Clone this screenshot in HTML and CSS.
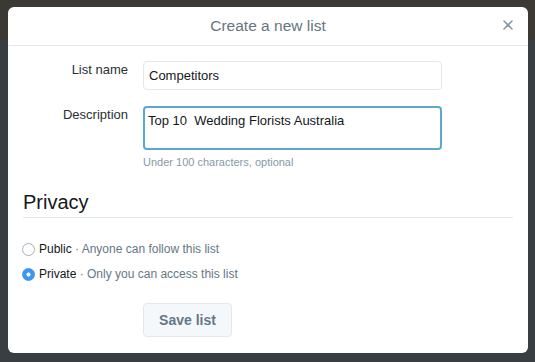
FILE: index.html
```html
<!DOCTYPE html>
<html>
<head>
<meta charset="utf-8">
<link rel="stylesheet" href="styles.css">
</head>
<body>
<div class="modal">
  <div class="modal-header">
    <h1 class="modal-title">Create a new list</h1>
    <button class="close" aria-label="Close">
      <svg width="10" height="10" viewBox="0 0 10 10"><path d="M1 1 L9 9 M9 1 L1 9" stroke="#8899a6" stroke-width="1.6" stroke-linecap="round"/></svg>
    </button>
  </div>
  <div class="modal-body">
    <div class="form-grid">
      <label class="field-label">List name</label>
      <input class="text-input" type="text" value="Competitors">
      <label class="field-label">Description</label>
      <div class="field">
        <textarea class="text-area">Top 10  Wedding Florists Australia</textarea>
        <p class="hint">Under 100 characters, optional</p>
      </div>
    </div>
    <h2 class="section-title">Privacy</h2>
    <div class="radios">
      <label class="radio-row"><input type="radio" name="privacy" class="radio"><span class="opt">Public</span><span class="desc">&nbsp;· Anyone can follow this list</span></label>
      <label class="radio-row"><input type="radio" name="privacy" class="radio" checked><span class="opt">Private</span><span class="desc">&nbsp;· Only you can access this list</span></label>
    </div>
    <div class="actions">
      <button class="btn">Save list</button>
    </div>
  </div>
</div>
</body>
</html>
```
FILE: styles.css
```css
* { box-sizing: border-box; }
html, body { margin: 0; padding: 0; }
body {
  width: 535px;
  height: 362px;
  overflow: hidden;
  font-family: "Liberation Sans", Arial, sans-serif;
  background: linear-gradient(to bottom, #3c3934 0, #3c3934 40px, #383e42 40px, #383e42 100%);
  padding: 7px 7px 9px 8px;
}
.modal {
  width: 520px;
  height: 346px;
  background: #fff;
  border-radius: 6px;
  overflow: hidden;
}
.modal-header {
  height: 39px;
  border-bottom: 1px solid #e1e8ed;
  display: flex;
  align-items: center;
  justify-content: center;
  position: relative;
}
.modal-title {
  margin: 0;
  font-size: 15.5px;
  font-weight: normal;
  color: #66757f;
  line-height: 20px;
}
.close {
  position: absolute;
  right: 15px;
  top: 13px;
  width: 10px;
  height: 10px;
  padding: 0;
  border: 0;
  background: none;
  display: flex;
}
.modal-body {
  padding: 15px 15px 0 15px;
}
.form-grid {
  display: grid;
  grid-template-columns: 105px 299px;
  column-gap: 15px;
  row-gap: 16px;
  align-items: start;
}
.field-label {
  text-align: right;
  font-size: 13px;
  line-height: 16px;
  padding-top: 1px;
  color: #292f33;
}
.text-input {
  height: 29px;
  border: 1px solid #e1e8ed;
  border-radius: 4px;
  padding: 0 5px;
  font-family: inherit;
  font-size: 13px;
  color: #14171a;
  width: 299px;
  outline: none;
}
.field { display: flex; flex-direction: column; }
.text-area {
  height: 44px;
  width: 299px;
  border: 2px solid #5aa9cc;
  border-radius: 4px;
  padding: 5px 3px;
  font-family: inherit;
  font-size: 13px;
  line-height: 16px;
  color: #14171a;
  resize: none;
  outline: none;
  display: block;
}
.hint {
  margin: 6px 0 0;
  font-size: 11px;
  line-height: 13px;
  color: #8899a6;
}
.section-title {
  margin: 21px 0 0;
  font-size: 20px;
  line-height: 24px;
  font-weight: normal;
  color: #14171a;
  padding-bottom: 3px;
  border-bottom: 1px solid #e1e8ed;
}
.radios {
  margin-top: 21px;
  display: flex;
  flex-direction: column;
  gap: 5px;
}
.radio-row {
  display: flex;
  align-items: center;
  height: 20px;
  font-size: 12px;
  margin-left: -1px;
}
.radio {
  appearance: none;
  -webkit-appearance: none;
  width: 13px;
  height: 13px;
  margin: 0 4px 0 0;
  border-radius: 50%;
  border: 1px solid #a5b0b8;
  background: #fff;
  flex: none;
}
.radio:checked {
  border-color: #3d97f2;
  background: radial-gradient(circle, #fff 0, #fff 1.8px, #3d97f2 2.3px);
}
.opt { color: #14171a; }
.desc { color: #657786; }
.actions {
  margin-top: 19px;
  padding-left: 120px;
}
.btn {
  width: 89px;
  height: 34px;
  border: 1px solid #e1e8ed;
  border-radius: 4px;
  background: #f5f8fa;
  color: #657786;
  font-family: inherit;
  font-weight: bold;
  font-size: 14px;
  padding: 0;
}
```
